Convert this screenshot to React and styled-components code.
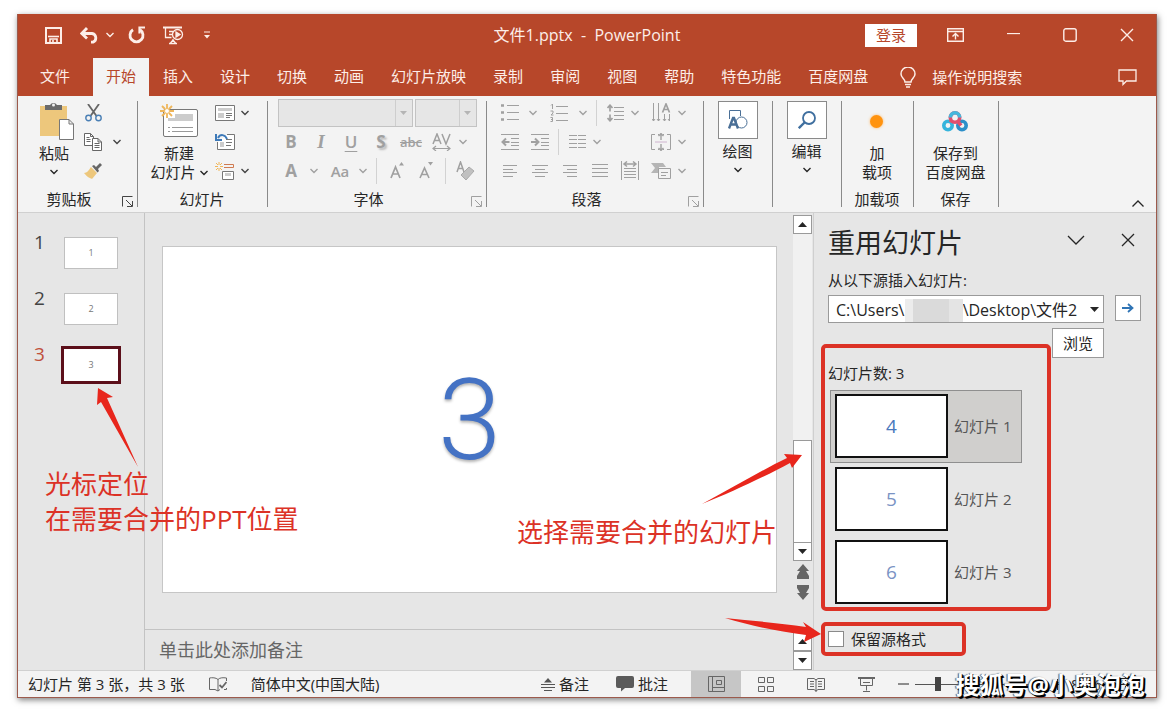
import React, { useState } from "react";
import styled, { createGlobalStyle, css } from "styled-components";

const TABS = ["文件", "开始", "插入", "设计", "切换", "动画", "幻灯片放映", "录制", "审阅", "视图", "帮助", "特色功能", "百度网盘"];
const REUSE_SLIDES = [4, 5, 6];

const Svg = ({ w, h, children, ...rest }) => (
	<svg width={w} height={h} viewBox={`0 0 ${w} ${h}`} fill="none" stroke="currentColor" aria-hidden="true" {...rest}>
		{children}
	</svg>
);

const Chevron = () => (
	<Svg w={8} h={6} strokeWidth="1.4">
		<path d="M.5 1l3.500 3.500L7.500 1" />
	</Svg>
);

const Caret = ({ up }) => (
	<Svg w={9} h={5} stroke="none">
		<path fill="currentColor" d={up ? "M0 5h9L4.500 0z" : "M0 0h9L4.500 5z"} />
	</Svg>
);

const SmallCaret = () => (
	<Svg w={7} h={4} stroke="none">
		<path fill="currentColor" d="M0 0h7L3.500 4z" />
	</Svg>
);

const Launcher = () => (
	<Svg w={11} h={11}>
		<path d="M.5 10.500V.5h10M4 4l6 6M10.500 5v5.500H5" />
	</Svg>
);

function DropTool({ w, chevron, label, children }) {
	return (
		<>
			<Tool $w={w} disabled aria-label={label}>
				{children}
			</Tool>
			<Tool $w={chevron} disabled aria-label={`${label}选项`}>
				<Chevron />
			</Tool>
		</>
	);
}

function TitleBar() {
	return (
		<TitleRow>
			<QuickBar>
				<IconButton $w={44} aria-label="保存">
					<Svg w={17} h={17} strokeWidth="2">
						<path d="M1 1h15v15H1z" />
						<path d="M3 9.500h11" strokeWidth="1.600" />
						<path d="M5 16v-4h7v4M8 13V16" strokeWidth="1.600" />
					</Svg>
				</IconButton>
				<IconButton $w={28} aria-label="撤消">
					<Svg w={19} h={17} strokeWidth="2.800">
						<path d="M2 6.500h10a4.500 4.500 0 0 1 1 8.600h-2M7 1L1.800 6.500 7 11.500" />
					</Svg>
				</IconButton>
				<IconButton $w={14} aria-label="撤消列表">
					<Chevron />
				</IconButton>
				<IconButton $w={40} aria-label="重复">
					<Svg w={18} h={18} strokeWidth="2.800">
						<path d="M5 3.800a6.500 6.500 0 1 0 7 0" />
						<path d="M17 1.500h-5.500v6" strokeWidth="2.200" />
					</Svg>
				</IconButton>
				<IconButton $w={32} aria-label="从头开始">
					<Svg w={21} h={19} strokeWidth="1.300">
						<path d="M0 1.500h19" strokeWidth="2" />
						<path d="M2.500 2v9.500h6M6 5.500h4M6 8.500h3M6 17.500h8M10 13v2M7.500 17l2.500-3 2.500 3" />
						<circle cx="14.500" cy="8.500" r="5" />
						<path d="M13 6l4 2.500-4 2.500z" fill="currentColor" />
					</Svg>
				</IconButton>
				<IconButton $w={36} aria-label="自定义快速访问工具栏">
					<Svg w={6} h={8}>
						<path d="M0 1h6" />
						<path d="M0 4h6L3 7.500z" fill="currentColor" stroke="none" />
					</Svg>
				</IconButton>
			</QuickBar>
			<DocTitle>文件1.pptx&nbsp; -&nbsp; PowerPoint</DocTitle>
			<WindowControls>
				<LoginButton>登录</LoginButton>
				<IconButton $w={76} aria-label="功能区显示选项">
					<Svg w={17} h={14} strokeWidth="1.400">
						<path d="M.7.7h15.600v12.600H.7zM1 3.500h15" />
						<path d="M8.500 11.500V6M5.500 8.500l3-3 3 3" />
					</Svg>
				</IconButton>
				<IconButton $w={40} aria-label="最小化">
					<Svg w={13} h={5} strokeWidth="1.300">
						<path d="M0 .5h13" />
					</Svg>
				</IconButton>
				<IconButton $w={74} aria-label="最大化">
					<Svg w={14} h={14} strokeWidth="1.400">
						<rect x=".8" y=".8" width="12.400" height="12.400" rx="2" />
					</Svg>
				</IconButton>
				<IconButton $w={40} aria-label="关闭">
					<Svg w={14} h={14} strokeWidth="1.400">
						<path d="M1 1l12 12M13 1L1 13" />
					</Svg>
				</IconButton>
			</WindowControls>
		</TitleRow>
	);
}

function TabBar() {
	return (
		<TabRow>
			{TABS.map((name, i) => (
				<Tab key={name} $file={i === 0} $active={i === 1}>
					{name}
				</Tab>
			))}
			<TellMe>
				<Svg w={16} h={21} strokeWidth="1.500">
					<path d="M5 15c0-3-4-4-4-8a7 7 0 0 1 14 0c0 4-4 5-4 8zM5 17.500h6M6 20h4" />
				</Svg>
				操作说明搜索
			</TellMe>
			<CommentButton aria-label="批注">
				<Svg w={19} h={17} strokeWidth="1.300">
					<path d="M1 1h17v11H8.500L5 15.500V12H1z" />
				</Svg>
			</CommentButton>
		</TabRow>
	);
}

function ClipboardGroup() {
	return (
		<Group $w={120}>
			<GroupBody $indent={14}>
				<BigButton $w={44}>
					<BigIcon>
						<Svg w={40} h={40} stroke="none">
							<path fill="#edc77c" d="M6 5h27v30H6z" />
							<path fill="#6b6b6b" d="M11 4h5a4 4 0 0 1 7 0h5v5H11z" />
							<circle cx="19.500" cy="4" r="1.500" fill="#f3f3f3" />
							<path d="M25.500 18.500H35l4.500 4.500v15.500h-14zM35 18.500V23h4.500" fill="#fff" stroke="#777" />
						</Svg>
					</BigIcon>
					粘贴
					<Chevron />
				</BigButton>
				<SmallColumn>
					<ToolRow>
						<Tool $w={34} $on aria-label="剪切">
							<Svg w={17} h={18} strokeWidth="1.800">
								<path d="M3 0l8.500 12M14 0L5.500 12" stroke="#666" />
								<circle cx="3.500" cy="14" r="2.700" stroke="#4a7fb5" strokeWidth="1.400" />
								<circle cx="13.500" cy="14" r="2.700" stroke="#4a7fb5" strokeWidth="1.400" />
							</Svg>
						</Tool>
					</ToolRow>
					<ToolRow>
						<Tool $w={34} $on aria-label="复制">
							<Svg w={18} h={18} stroke="#666">
								<path d="M.5.500h6l3 3v9h-9zM6.500.500v3h3M2.500 4.500h3M2.500 6.500h4M2.500 8.500h4" fill="#fff" />
								<path d="M8.500 5.500h5.500l3.500 3.500v8.500h-9zM14 5.500V9h3.500M10.500 10.500h5M10.500 12.500h5M10.500 14.500h5" fill="#fff" />
							</Svg>
						</Tool>
						<Tool $w={14} $on aria-label="复制选项">
							<Chevron />
						</Tool>
					</ToolRow>
					<ToolRow>
						<Tool $w={34} $on aria-label="格式刷">
							<Svg w={18} h={16} stroke="none">
								<path fill="#edc77c" d="M7 4l6 6-5 6c-2-1-5-2-8-6 3 0 5-3 7-6z" />
								<path fill="#666" d="M8 3l2-1 2 2 4-4 2 2-4 4 1 2-1.500 1.500z" />
							</Svg>
						</Tool>
					</ToolRow>
				</SmallColumn>
			</GroupBody>
			<GroupLabel $tail>
				<span>剪贴板</span>
				<LauncherButton $on aria-label="剪贴板设置">
					<Launcher />
				</LauncherButton>
			</GroupLabel>
		</Group>
	);
}

function SlidesGroup() {
	const rays = "M7 0v4M7 10v4M0 7h4M10 7h4M2 2l3 3M9 9l3 3M12 2L9 5M5 9l-3 3";
	return (
		<Group $w={130}>
			<GroupBody $indent={8}>
				<BigButton $w={66}>
					<BigIcon>
						<Svg w={38} h={34}>
							<rect x="3.500" y="5.500" width="34" height="27" rx="1.500" fill="#fff" stroke="#777" />
							<path fill="#ccc" stroke="none" d="M15 10h18v7H8v-3h7z" />
							<path d="M8 23.500h2M12 23.500h21M8 27.500h2M12 27.500h21" stroke="#999" />
							<path d={rays} stroke="#efb65a" strokeWidth="1.800" />
							<circle cx="7" cy="7" r="2.500" fill="#fff" stroke="#efb65a" />
						</Svg>
					</BigIcon>
					新建
					<Inline>
						幻灯片
						<Chevron />
					</Inline>
				</BigButton>
				<SmallColumn>
					<ToolRow>
						<Tool $w={26} $on aria-label="版式">
							<Svg w={20} h={16} stroke="#777">
								<path d="M.5.500h19v15H.5z" fill="#fff" />
								<path fill="#ccc" stroke="none" d="M3 3h14v3H3zM3 8h6v5H3z" />
								<path d="M11 8.500h6M11 10.500h6M11 12.500h4" />
							</Svg>
						</Tool>
						<Tool $w={14} $on aria-label="版式选项">
							<Chevron />
						</Tool>
					</ToolRow>
					<ToolRow>
						<Tool $w={26} $on aria-label="重置">
							<Svg w={20} h={17} stroke="#777">
								<path d="M12 1.500h7.500v15h-17V9" fill="#fff" />
								<path fill="#ccc" stroke="none" d="M5 9h4v5H5z" />
								<path d="M11 6.500h6M11 9.500h6M11 12.500h5" />
								<path d="M12 6C10 1 5 1 3 5M1 1v6h6" stroke="#3d79b8" strokeWidth="2" />
							</Svg>
						</Tool>
					</ToolRow>
					<ToolRow>
						<Tool $w={26} $on aria-label="节">
							<Svg w={20} h={18} stroke="#777">
								<path d="M4 0v3M4 6v3M0 4.500h3M5 4.500h3M1 1l2 2M7 1L5 3M1 8l2-2M7 8L5 6" stroke="#efb65a" />
								<path d="M9 2.500h9.500v3H9" stroke="#d07a50" />
								<path d="M7.500 9.500h11v8h-11z" fill="#fff" />
								<path fill="#ccc" stroke="none" d="M10 11h6v3h-6z" />
							</Svg>
						</Tool>
						<Tool $w={14} $on aria-label="节选项">
							<Chevron />
						</Tool>
					</ToolRow>
				</SmallColumn>
			</GroupBody>
			<GroupLabel>幻灯片</GroupLabel>
		</Group>
	);
}

function FontGroup() {
	return (
		<Group $w={219}>
			<GroupRows>
				<ToolRow $boxes>
					<ComboShell $w={135}>
						<DisabledSelect disabled aria-label="字体" />
						<SmallCaret />
					</ComboShell>
					<ComboShell $w={62}>
						<DisabledSelect disabled aria-label="字号" />
						<SmallCaret />
					</ComboShell>
				</ToolRow>
				<ToolRow>
					<Tool $w={30} disabled><b>B</b></Tool>
					<Tool $w={30} disabled><SerifItalic>I</SerifItalic></Tool>
					<Tool $w={30} disabled><Underlined>U</Underlined></Tool>
					<Tool $w={30} disabled><Shadowed>S</Shadowed></Tool>
					<Tool $w={30} disabled><Struck>abc</Struck></Tool>
					<DropTool w={32} chevron={10} label="字符间距">
						<Svg w={20} h={18} strokeWidth="1.500">
							<path d="M1 11L5 1l4 10M2.500 7.500h5M10 1l4 10 4-10" />
							<path d="M1 15.500h17M4 13l-3 2.500L4 18M15 13l3 2.500-3 2.500" strokeWidth="1.200" />
						</Svg>
					</DropTool>
				</ToolRow>
				<ToolRow>
					<DropTool w={30} chevron={16} label="字体颜色">
						<b>A</b>
					</DropTool>
					<DropTool w={36} chevron={10} label="更改大小写">
						<Medium>Aa</Medium>
					</DropTool>
					<Separator $gap={8} />
					<Tool $w={24} disabled aria-label="增大字号">
						<Svg w={15} h={17} strokeWidth="1.700">
							<path d="M1 16L5.500 5l4.500 11M2.500 12h6" />
							<path d="M9 3.500L11.500 0 14 3.500z" fill="currentColor" stroke="none" />
						</Svg>
					</Tool>
					<Tool $w={34} disabled aria-label="减小字号">
						<Svg w={15} h={17} strokeWidth="1.600">
							<path d="M1 16L5.500 6l4.500 10M2.500 12.500h6" />
							<path d="M9 0h5l-2.500 3.500z" fill="currentColor" stroke="none" />
						</Svg>
					</Tool>
					<Separator $gap={2} />
					<Tool $w={34} disabled aria-label="清除格式">
						<Svg w={19} h={19} strokeWidth="1.500">
							<path d="M1 11L4.500 1 8 11M2 7.500h5" />
							<path d="M13 6l5 4-8 9-5-5z" fill="#c0c0c0" stroke="#aaa" strokeWidth="1" />
						</Svg>
					</Tool>
				</ToolRow>
			</GroupRows>
			<GroupLabel $tail>
				<span>字体</span>
				<LauncherButton aria-label="字体设置">
					<Launcher />
				</LauncherButton>
			</GroupLabel>
		</Group>
	);
}

function ParagraphGroup() {
	return (
		<Group $w={217}>
			<GroupRows>
				<ToolRow>
					<DropTool w={30} chevron={16} label="项目符号">
						<Svg w={18} h={17}>
							<path d="M6 1.500h12M6 8.500h12M6 15.500h12" />
							<path d="M0 1.500h3M0 8.500h3M0 15.500h3" strokeWidth="2.500" />
						</Svg>
					</DropTool>
					<DropTool w={36} chevron={12} label="编号">
						<Svg w={18} h={18}>
							<path d="M6 2.500h12M6 9.500h12M6 16.500h12M1 1.500L2.500 0v5M.500 7h2.500v2l-2 2h2.500M.500 13.500h2v4h-2M1 15.500h1.500" />
						</Svg>
					</DropTool>
					<Separator $gap={7} />
					<DropTool w={22} chevron={18} label="行距">
						<Svg w={17} h={18}>
							<path d="M7 3.500h10M7 7.500h10M7 11.500h10M7 15.500h10" />
							<path d="M3 1v6.500M.500 4L3 1.200 5.500 4M3 10.500V17M.500 14L3 16.800 5.500 14" strokeWidth="1.700" />
						</Svg>
					</DropTool>
					<RowTail>
						<DropTool w={30} chevron={12} label="文字方向">
							<Svg w={19} h={19}>
								<path d="M1.500 0v18M6.500 0v18M12.500 11v7M17.500 11v7" />
								<path d="M0 16l1.500 2L3 16M5 16l1.500 2L8 16M11 16l1.500 2 1.500-2M16 16l1.500 2" />
								<path d="M10.500 9.500L14 1l3.500 8.500M12 6.500h4" strokeWidth="1.700" />
							</Svg>
						</DropTool>
					</RowTail>
				</ToolRow>
				<ToolRow>
					<Tool $w={30} disabled aria-label="减少缩进">
						<Svg w={18} h={16}>
							<path d="M0 .5h18M10 4.500h8M10 8.500h8M10 11.500h8M0 15.500h18" />
							<path d="M8.500 8H1.500M5 4.500L1.500 8 5 11.500" strokeWidth="2" />
						</Svg>
					</Tool>
					<Tool $w={30} disabled aria-label="增加缩进">
						<Svg w={18} h={16}>
							<path d="M0 .5h18M10 4.500h8M10 8.500h8M10 11.500h8M0 15.500h18" />
							<path d="M0 8h7M4 4.500L7.500 8 4 11.500" strokeWidth="2" />
						</Svg>
					</Tool>
					<Separator $gap={3} />
					<DropTool w={30} chevron={10} label="分栏">
						<Svg w={17} h={14}>
							<path d="M0 .5h8M9 .5h8M0 4.500h8M9 4.500h8M0 8.500h8M9 8.500h8M0 12.500h8M9 12.500h8" />
						</Svg>
					</DropTool>
					<RowTail>
						<DropTool w={30} chevron={12} label="对齐文本">
							<Svg w={20} h={18}>
								<path d="M4 1.500H.5v15H4M16 1.500h3.500v15H16M7 1.500h1M12 1.500h1M7 16.500h1M12 16.500h1" />
								<path d="M10 0v7M7.500 3L10 .7 12.500 3M10 11v7M7.500 15l2.500 2.300 2.500-2.300" strokeWidth="1.400" />
								<path d="M4 9h12" stroke="#cfb4cf" />
							</Svg>
						</DropTool>
					</RowTail>
				</ToolRow>
				<ToolRow>
					<Tool $w={30} disabled aria-label="左对齐">
						<Svg w={14} h={12}>
							<path d="M0 .5h14M0 4.500h10M0 7.500h14M0 11.500h10" />
						</Svg>
					</Tool>
					<Tool $w={30} disabled aria-label="居中">
						<Svg w={16} h={12}>
							<path d="M0 .5h16M3 4.500h10M0 7.500h16M3 11.500h10" />
						</Svg>
					</Tool>
					<Tool $w={30} disabled aria-label="右对齐">
						<Svg w={14} h={12}>
							<path d="M0 .5h14M4 4.500h10M0 7.500h14M4 11.500h10" />
						</Svg>
					</Tool>
					<Tool $w={30} disabled aria-label="两端对齐">
						<Svg w={16} h={14}>
							<path d="M0 .5h16M0 4.500h16M0 8.500h16M0 12.500h16" />
						</Svg>
					</Tool>
					<Tool $w={30} disabled aria-label="分散对齐">
						<Svg w={18} h={19}>
							<path d="M.5 0v19M17.500 0v19M3 7.500h12M3 10.500h12M3 13.500h12M3 16.500h12" />
							<path d="M3 3h12M6 .5L3 3l3 2.500M12 .5L15 3l-3 2.500" strokeWidth="1.500" />
						</Svg>
					</Tool>
					<RowTail>
						<DropTool w={30} chevron={12} label="转换为 SmartArt">
							<Svg w={20} h={16}>
								<path d="M0 0h12l3 4H8v6H0l4-5z" fill="#b5b5b5" stroke="none" />
								<path d="M7.500 5.500h12v10h-12z" fill="#f3f3f3" />
								<path d="M10 9.500h7M10 12.500h5" />
							</Svg>
						</DropTool>
					</RowTail>
				</ToolRow>
			</GroupRows>
			<GroupLabel $tail>
				<span>段落</span>
				<LauncherButton aria-label="段落设置">
					<Launcher />
				</LauncherButton>
			</GroupLabel>
		</Group>
	);
}

function Ribbon() {
	return (
		<RibbonRow>
			<ClipboardGroup />
			<SlidesGroup />
			<FontGroup />
			<ParagraphGroup />
			<Group $w={69}>
				<BigButton>
					<BigIcon $tile>
						<Tile>
							<Svg w={20} h={20} stroke="#4a6f96">
								<path d="M1.500 9V.5h11V6" />
								<circle cx="13.500" cy="12.500" r="5.500" />
								<path d="M1 18.500L5 8h1l4 10.500M2.500 14.500h6" strokeWidth="2.400" />
							</Svg>
						</Tile>
					</BigIcon>
					绘图
					<Chevron />
				</BigButton>
			</Group>
			<Group $w={69}>
				<BigButton>
					<BigIcon $tile>
						<Tile>
							<Svg w={18} h={18} stroke="#3f6f9f" strokeWidth="1.800">
								<circle cx="11" cy="7" r="6" />
								<path d="M6.500 11.500L.800 17.200" strokeWidth="2.400" />
							</Svg>
						</Tile>
					</BigIcon>
					编辑
					<Chevron />
				</BigButton>
			</Group>
			<Group $w={72}>
				<BigButton>
					<BigIcon>
						<Dot />
					</BigIcon>
					加
					<br />
					载项
				</BigButton>
				<GroupLabel>加载项</GroupLabel>
			</Group>
			<Group $w={85}>
				<BigButton>
					<BigIcon>
						<Svg w={26} h={21} strokeWidth="3.600">
							<circle cx="6" cy="14.500" r="4.200" stroke="#35b4dc" />
							<circle cx="20" cy="14.500" r="4.200" stroke="#2c8fc9" />
							<circle cx="13" cy="6.500" r="4.700" stroke="#e0506e" />
							<path d="M8.300 6.500a4.700 4.700 0 0 1 9.400 0" stroke="#45b8dd" />
							<path d="M9.500 10L8.800 11.500M16 10.500l3 4" stroke="#e0506e" />
						</Svg>
					</BigIcon>
					保存到
					<br />
					百度网盘
				</BigButton>
				<GroupLabel>保存</GroupLabel>
			</Group>
			<CollapseButton aria-label="折叠功能区">
				<Svg w={12} h={7} strokeWidth="1.300">
					<path d="M.5 6.500L6 1l5.500 5.500" />
				</Svg>
			</CollapseButton>
		</RibbonRow>
	);
}

function ThumbnailPane() {
	return (
		<Thumbnails>
			{[1, 2, 3].map((n) => (
				<ThumbRow key={n}>
					<ThumbNumber $active={n === 3}>{n}</ThumbNumber>
					<ThumbFrame $active={n === 3}>{n}</ThumbFrame>
				</ThumbRow>
			))}
			<CursorArrow>
				<Svg w={42} h={80} stroke="none">
					<path fill="#e8261c" d="M1 0l15 9-6 1 31 69L4 14l-4 3z" />
				</Svg>
			</CursorArrow>
			<CursorNote>
				光标定位
				<br />
				在需要合并的PPT位置
			</CursorNote>
		</Thumbnails>
	);
}

function Editor() {
	return (
		<EditorPane>
			<StageRow>
				<Stage>
					<Slide>3</Slide>
				</Stage>
				<ScrollColumn>
					<ScrollButton aria-label="向上滚动">
						<Caret up />
					</ScrollButton>
					<Track>
						<TrackThumb />
					</Track>
					<ScrollButton aria-label="向下滚动">
						<Caret />
					</ScrollButton>
					<JumpButton aria-label="上一张">
						<Svg w={12} h={15} stroke="none">
							<path fill="#666" d="M6 0l6 7H9l3 5v3H0v-3l3-5H0z" />
						</Svg>
					</JumpButton>
					<JumpButton aria-label="下一张">
						<Svg w={12} h={15} stroke="none">
							<path fill="#666" d="M6 15l6-7H9l3-5V0H0v3l3 5H0z" />
						</Svg>
					</JumpButton>
				</ScrollColumn>
				<SelectNote>选择需要合并的幻灯片</SelectNote>
				<SelectArrow>
					<Svg w={100} h={50} stroke="none">
						<path fill="#e8261c" d="M0 50C30 34 60 16 85 4l-3-4 18 1-10 13-2-5C64 22 30 38 0 50z" />
					</Svg>
				</SelectArrow>
			</StageRow>
			<NotesRow>
				<Notes>单击此处添加备注</Notes>
				<ScrollColumn>
					<ScrollButton aria-label="备注向上">
						<Caret up />
					</ScrollButton>
					<ScrollButton aria-label="备注向下">
						<Caret />
					</ScrollButton>
				</ScrollColumn>
			</NotesRow>
		</EditorPane>
	);
}

function ReusePane() {
	const [path, setPath] = useState("C:\\Users\\              \\Desktop\\文件2");
	const [keep, setKeep] = useState(false);
	const [selected, setSelected] = useState(0);

	return (
		<Reuse>
			<ReuseHeader>
				<ReuseTitle>重用幻灯片</ReuseTitle>
				<PaneButton aria-label="任务窗格选项">
					<Svg w={18} h={10} strokeWidth="1.300">
						<path d="M1 1l8 8 8-8" />
					</Svg>
				</PaneButton>
				<PaneButton aria-label="关闭窗格">
					<Svg w={14} h={14} strokeWidth="1.300">
						<path d="M1 1l12 12M13 1L1 13" />
					</Svg>
				</PaneButton>
			</ReuseHeader>
			<SourceLabel htmlFor="source">从以下源插入幻灯片:</SourceLabel>
			<SourceRow>
				<PathBox>
					<PathInput id="source" value={path} onChange={(e) => setPath(e.target.value)} />
					<Mosaic />
					<Caret />
				</PathBox>
				<GoButton aria-label="转到">
					<Svg w={12} h={10} stroke="#2f74b5" strokeWidth="1.800">
						<path d="M0 5h10M6 1l4.500 4L6 9" />
					</Svg>
				</GoButton>
			</SourceRow>
			<BrowseButton>浏览</BrowseButton>
			<ReuseList>
				<RedFrame />
				<Count>幻灯片数: 3</Count>
				{REUSE_SLIDES.map((n, i) => (
					<ReuseItem key={n} $active={selected === i} onClick={() => setSelected(i)}>
						<ReuseThumb $active={i === 0}>{n}</ReuseThumb>
						幻灯片 {i + 1}
					</ReuseItem>
				))}
			</ReuseList>
			<KeepRow>
				<RedFrame $tight />
				<KeepArrow>
					<Svg w={96} h={24} stroke="none">
						<path fill="#e8261c" d="M0 0c28 3 56 5 81 9l-3-5 18 12-17 8 2-7C56 14 26 8 0 0z" />
					</Svg>
				</KeepArrow>
				<KeepBox id="keep" type="checkbox" checked={keep} onChange={(e) => setKeep(e.target.checked)} />
				<label htmlFor="keep">保留源格式</label>
			</KeepRow>
		</Reuse>
	);
}

function StatusBar() {
	return (
		<StatusRow>
			<StatusText>幻灯片 第 3 张，共 3 张</StatusText>
			<StatusButton $w={66} aria-label="拼写检查">
				<Svg w={18} h={15} stroke="#666">
					<path d="M9 2.500V14M9 2.500C7 .5 3 .5.5 1v11.500H6L9 14l2-1.500M9 2.500C11 .5 14 .5 17.500 1v3M17.500 11v1.500H15" />
					<path d="M10.500 8l2.500 2.500L17.500 5" strokeWidth="1.800" />
				</Svg>
			</StatusButton>
			<StatusText>简体中文(中国大陆)</StatusText>
			<StatusRight>
				<StatusButton $w={75} $text>
					<Svg w={14} h={13} stroke="#555">
						<path d="M0 6.500h14M0 9.500h14M3 12.500h8" />
						<path d="M3 4.500h8L7 0z" fill="#555" stroke="none" />
					</Svg>
					备注
				</StatusButton>
				<StatusButton $w={75} $text>
					<Svg w={18} h={16} stroke="none">
						<path fill="#5a5a5a" d="M2 0h14a2 2 0 0 1 2 2v8a2 2 0 0 1-2 2H9l-4 3.500V12H2a2 2 0 0 1-2-2V2a2 2 0 0 1 2-2z" />
					</Svg>
					批注
				</StatusButton>
				<StatusButton $w={50} $active aria-label="普通视图">
					<Svg w={17} h={16} stroke="#666">
						<path d="M.5.500h16v15H.5zM4.500.500v15M4.500 11.500h12M8.500 4.500h5v4h-5z" />
					</Svg>
				</StatusButton>
				<StatusButton $w={50} aria-label="幻灯片浏览">
					<Svg w={16} h={15} stroke="#666">
						<path d="M.5.500h6v5h-6zM9.500.500h6v5h-6zM.5 9.500h6v5h-6zM9.500 9.500h6v5h-6z" />
					</Svg>
				</StatusButton>
				<StatusButton $w={50} aria-label="阅读视图">
					<Svg w={18} h={15} stroke="#666">
						<path d="M9 2v13M.5 1.500H7L9 3l2-1.500h6.500v11H11L9 14l-2-1.500H.5zM3 4.500h4M3 7h4M3 9.500h4M11 4.500h4M11 7h4M11 9.500h4" />
					</Svg>
				</StatusButton>
				<StatusButton $w={50} aria-label="幻灯片放映">
					<Svg w={17} h={15} stroke="#666">
						<path d="M0 1h17" strokeWidth="2" />
						<path d="M2.500 2v6.500h12V2M5 5.500h7M8.500 8.500v5M5 14.500h7" />
					</Svg>
				</StatusButton>
				<ZoomArea>
					<StatusButton $w={24} aria-label="缩小">
						<Svg w={11} h={2}>
							<path d="M0 1h11" />
						</Svg>
					</StatusButton>
					<ZoomRange type="range" min="10" max="400" defaultValue="74" aria-label="缩放" />
					<StatusButton $w={28} aria-label="放大">
						<Svg w={11} h={11}>
							<path d="M0 5.500h11M5.500 0v11" />
						</Svg>
					</StatusButton>
					<StatusText>83%</StatusText>
					<StatusButton $w={50} aria-label="适应窗口">
						<Svg w={15} h={13}>
							<path d="M.5.500h14v12H.500zM7.500 2v3M7.500 8v3M3 6.500h3M9 6.500h3" />
						</Svg>
					</StatusButton>
				</ZoomArea>
			</StatusRight>
			<Watermark>搜狐号@小奥泡泡</Watermark>
		</StatusRow>
	);
}

function App() {
	return (
		<>
			<GlobalStyle />
			<Desk>
				<AppWindow>
					<TitleBar />
					<TabBar />
					<Ribbon />
					<Workspace>
						<ThumbnailPane />
						<Editor />
						<ReusePane />
					</Workspace>
					<StatusBar />
				</AppWindow>
			</Desk>
		</>
	);
}

const GlobalStyle = createGlobalStyle`
	* {
		box-sizing: border-box;
	}
	body {
		margin: 0;
		background: #fff;
		color: #262626;
		font: 15px/20px "Open Sans", "Noto Sans CJK SC", sans-serif;
	}
	button,
	input,
	select {
		font: inherit;
		color: inherit;
	}
	button {
		display: flex;
		align-items: center;
		justify-content: center;
		padding: 0;
		border: 0;
		background: none;
		white-space: nowrap;
	}
	svg {
		display: block;
		flex: none;
	}
`;

const Desk = styled.div`
	display: grid;
	min-height: 100vh;
	padding: 14px 15px 13px 17px;
`;

const AppWindow = styled.main`
	display: grid;
	grid-template-rows: auto auto auto 1fr auto;
	border: 1px solid #9c5a4c;
	border-top: 0;
	background: #e6e6e6;
	box-shadow: 1px 2px 6px rgba(0, 0, 0, 0.5);
`;

const TitleRow = styled.header`
	display: grid;
	grid-template-columns: 1fr auto 1fr;
	align-items: center;
	height: 44px;
	padding-bottom: 2px;
	background: #b7472a;
	color: #fdeee8;
`;

const QuickBar = styled.div`
	display: flex;
	align-items: center;
	padding-left: 13px;
`;

const IconButton = styled.button`
	width: ${(p) => p.$w}px;
	height: 40px;
`;

const DocTitle = styled.h1`
	margin: 0;
	font-size: 16px;
	font-weight: 400;
`;

const WindowControls = styled.div`
	display: flex;
	align-items: center;
	justify-content: flex-end;
	padding-right: 9px;
`;

const LoginButton = styled.button`
	width: 52px;
	height: 23px;
	background: #fff;
	color: #b7472a;
`;

const TabRow = styled.nav`
	display: flex;
	gap: 1px;
	height: 38px;
	background: #b7472a;
	color: #fdeee8;
`;

const Tab = styled.button`
	padding: 0 ${(p) => (p.$file ? 22 : 13)}px 2px;
	${(p) =>
		p.$active &&
		css`
			background: #f3f3f3;
			color: #b7472a;
		`}
`;

const TellMe = styled.button`
	gap: 16px;
	margin-left: 18px;
`;

const CommentButton = styled.button`
	margin-left: auto;
	padding: 0 19px;
`;

const RibbonRow = styled.section`
	display: flex;
	height: 117px;
	border-bottom: 1px solid #d0d0d0;
	background: #f3f3f3;
`;

const Group = styled.div`
	position: relative;
	display: flex;
	flex-direction: column;
	flex: none;
	width: ${(p) => p.$w}px;
	padding: 2px 2px 0 0;
	&::after {
		content: "";
		position: absolute;
		top: 5px;
		right: 0;
		bottom: 5px;
		width: 1px;
		background: #8a8a8a;
	}
`;

const GroupBody = styled.div`
	display: flex;
	align-items: flex-start;
	padding-left: ${(p) => p.$indent}px;
`;

const GroupRows = styled.div`
	padding: 0 14px 0 8px;
`;

const GroupLabel = styled.div`
	display: flex;
	align-items: center;
	justify-content: center;
	height: 26px;
	margin-top: auto;
	${(p) =>
		p.$tail &&
		css`
			display: grid;
			grid-template-columns: 1fr auto;
			padding-left: 2px;
			text-align: center;
		`}
`;

const LauncherButton = styled.button`
	width: 18px;
	height: 22px;
	padding-top: 4px;
	color: ${(p) => (p.$on ? "#444" : "#a0a0a0")};
`;

const BigButton = styled.button`
	flex-direction: column;
	justify-content: flex-start;
	align-self: ${(p) => (p.$w ? "flex-start" : "center")};
	width: ${(p) => (p.$w ? `${p.$w}px` : "auto")};
	line-height: 19px;
	& > svg {
		margin-top: 6px;
	}
`;

const BigIcon = styled.span`
	display: flex;
	align-items: ${(p) => (p.$tile ? "flex-start" : "center")};
	justify-content: center;
	height: ${(p) => (p.$tile ? 44 : 46)}px;
	padding-top: ${(p) => (p.$tile ? 3 : 0)}px;
`;

const Inline = styled.span`
	display: flex;
	align-items: center;
	gap: 4px;
`;

const Tile = styled.span`
	display: grid;
	place-items: center;
	width: 40px;
	height: 38px;
	border: 1px solid #8a8a8a;
	background: #fff;
`;

const Dot = styled.span`
	width: 13px;
	height: 13px;
	border-radius: 50%;
	background: #ff930f;
	box-shadow: 0 0 3px #ffb765;
`;

const SmallColumn = styled.div`
	display: flex;
	flex-direction: column;
`;

const ToolRow = styled.div`
	display: flex;
	align-items: center;
	height: 29px;
	${(p) =>
		p.$boxes &&
		css`
			gap: 2px;
			padding-left: 2px;
		`}
`;

const RowTail = styled.div`
	display: flex;
	margin-left: auto;
`;

const Tool = styled.button`
	flex: none;
	width: ${(p) => p.$w}px;
	height: 26px;
	color: ${(p) => (p.$on ? "#444" : "#a0a0a0")};
	b {
		font-size: 17px;
		font-weight: 700;
	}
`;

const SerifItalic = styled.i`
	font-family: "Liberation Serif", serif;
	font-size: 19px;
	font-weight: 700;
`;

const Underlined = styled.u`
	font-size: 17px;
	font-weight: 600;
	text-underline-offset: 3px;
`;

const Shadowed = styled.span`
	font-size: 17px;
	font-weight: 700;
	text-shadow: 2px 2px 2px #bbb;
`;

const Struck = styled.s`
	font-size: 13px;
	font-weight: 600;
`;

const Medium = styled.span`
	font-weight: 600;
`;

const Separator = styled.span`
	flex: none;
	width: 1px;
	height: 26px;
	margin: 0 ${(p) => p.$gap}px;
	background: #d2d2d2;
`;

const ComboShell = styled.span`
	display: flex;
	flex: none;
	align-items: center;
	width: ${(p) => p.$w}px;
	height: 28px;
	padding-right: 5px;
	border: 1px solid #c3c3c3;
	background: #e6e6e6;
	color: #b5b5b5;
`;

const DisabledSelect = styled.select`
	flex: 1;
	min-width: 0;
	height: 26px;
	margin-right: 4px;
	border: 0;
	border-right: 1px solid #c3c3c3;
	background: none;
	appearance: none;
`;

const CollapseButton = styled.button`
	align-self: flex-end;
	width: 36px;
	height: 18px;
	margin-left: auto;
`;

const Workspace = styled.div`
	display: grid;
	grid-template-columns: 127px 1fr 342px;
`;

const Thumbnails = styled.aside`
	position: relative;
	padding-top: 12px;
	border-right: 1px solid #c3c3c3;
`;

const ThumbRow = styled.div`
	display: grid;
	grid-template-columns: 43px 60px;
	align-items: center;
	height: 56px;
`;

const ThumbNumber = styled.span`
	align-self: start;
	padding: 7px 0 0 16px;
	font-size: 19px;
	color: ${(p) => (p.$active ? "#c0503a" : "#444")};
`;

const ThumbFrame = styled.div`
	display: grid;
	place-items: center;
	height: 32px;
	margin: 0 3px;
	border: 1px solid #c0c0c0;
	background: #fff;
	color: #777;
	font-size: 9px;
	${(p) =>
		p.$active &&
		css`
			height: 38px;
			margin: 0;
			border: 3px solid #5c0f1a;
		`}
`;

const annotation = css`
	position: absolute;
	z-index: 2;
	color: #dc3226;
	font-size: 26px;
	line-height: 35px;
	white-space: nowrap;
	pointer-events: none;
`;

const CursorArrow = styled.div`
	${annotation}
	top: 175px;
	left: 79px;
`;

const CursorNote = styled.div`
	${annotation}
	top: 254px;
	left: 27px;
`;

const SelectNote = styled.div`
	${annotation}
	right: 36px;
	bottom: 79px;
`;

const SelectArrow = styled.div`
	${annotation}
	right: 11px;
	bottom: 125px;
`;

const EditorPane = styled.section`
	display: grid;
	grid-template-rows: 1fr 40px;
	border-right: 1px solid #cfcfcf;
`;

const StageRow = styled.div`
	position: relative;
	display: flex;
	border-bottom: 1px solid #c3c3c3;
`;

const Stage = styled.div`
	flex: 1;
	display: grid;
	padding: 33px 16px 36px 17px;
`;

const Slide = styled.div`
	display: grid;
	place-items: center;
	border: 1px solid #c6c6c6;
	background: #fff;
	color: #4472c4;
	font: 300 114px/120px Roboto, sans-serif;
	text-shadow: 0 2px 3px rgba(0, 0, 0, 0.3);
`;

const ScrollColumn = styled.div`
	display: flex;
	flex-direction: column;
	width: 20px;
	padding: 2px 1px 0 0;
`;

const ScrollButton = styled.button`
	flex: none;
	height: 19px;
	border: 1px solid #9a9a9a;
	background: #fff;
`;

const Track = styled.div`
	flex: 1;
	display: flex;
	align-items: flex-end;
	background: #f1f1f1;
`;

const TrackThumb = styled.div`
	width: 100%;
	height: 33%;
	border: 1px solid #9a9a9a;
	border-bottom: 0;
	background: #fff;
`;

const JumpButton = styled.button`
	height: 21px;
	&:last-child {
		margin-bottom: 26px;
	}
`;

const NotesRow = styled.div`
	display: flex;
`;

const Notes = styled.div`
	flex: 1;
	padding: 10px 14px;
	color: #666;
	font-size: 18px;
`;

const Reuse = styled.aside`
	padding: 13px 15px 0 14px;
`;

const ReuseHeader = styled.div`
	display: flex;
	align-items: flex-start;
	height: 34px;
`;

const ReuseTitle = styled.h2`
	flex: 1;
	margin: 0;
	font-size: 27px;
	font-weight: 400;
	line-height: 34px;
`;

const PaneButton = styled.button`
	width: 26px;
	height: 28px;
	& + & {
		margin-left: 26px;
	}
`;

const SourceLabel = styled.label`
	display: block;
	margin: 10px 0 5px;
	line-height: 20px;
`;

const SourceRow = styled.div`
	display: flex;
	gap: 11px;
`;

const PathBox = styled.div`
	position: relative;
	flex: 1;
	display: flex;
	align-items: center;
	height: 28px;
	padding-right: 4px;
	border: 1px solid #9a9a9a;
	background: #fff;
`;

const PathInput = styled.input`
	flex: 1;
	min-width: 0;
	height: 24px;
	padding: 0 0 0 7px;
	border: 0;
	outline: 0;
	background: none;
	font-size: 16px;
`;

const Mosaic = styled.span`
	position: absolute;
	top: 3px;
	left: 76px;
	width: 58px;
	height: 23px;
	background: linear-gradient(90deg, #ececec 0 8px, #dadada 8px 44px, #e4e4e4 44px);
`;

const GoButton = styled.button`
	width: 26px;
	height: 26px;
	border: 1px solid #9a9a9a;
	background: #fff;
`;

const BrowseButton = styled.button`
	width: 52px;
	height: 30px;
	margin: 5px 37px 0 auto;
	border: 1px solid #9a9a9a;
	background: #fff;
`;

const ReuseList = styled.div`
	position: relative;
	margin-top: 5px;
`;

const Count = styled.div`
	height: 27px;
`;

const ReuseItem = styled.button`
	justify-content: flex-start;
	gap: 6px;
	width: 192px;
	height: 73px;
	margin-left: 2px;
	padding: 0 0 1px 4px;
	border: 1px solid ${(p) => (p.$active ? "#8f8f8f" : "transparent")};
	background: ${(p) => (p.$active ? "#d0cfcd" : "transparent")};
	color: #555;
`;

const ReuseThumb = styled.span`
	display: grid;
	place-items: center;
	width: 113px;
	height: 64px;
	border: 2px solid #111;
	background: #fff;
	color: ${(p) => (p.$active ? "#4a78bd" : "#7a93c4")};
	font-size: 19px;
`;

const RedFrame = styled.span`
	position: absolute;
	top: ${(p) => (p.$tight ? -6 : -19)}px;
	bottom: ${(p) => (p.$tight ? -6 : -2)}px;
	left: -7px;
	width: ${(p) => (p.$tight ? 145 : 230)}px;
	border: 4px solid #dc3226;
	border-radius: 5px;
	pointer-events: none;
`;

const KeepRow = styled.div`
	position: relative;
	display: flex;
	align-items: center;
	gap: 7px;
	height: 22px;
	margin-top: 19px;
`;

const KeepArrow = styled.div`
	${annotation}
	top: -10px;
	left: -103px;
`;

const KeepBox = styled.input`
	width: 16px;
	height: 16px;
	margin: 0;
	border: 1px solid #8a8a8a;
	background: #fff;
	appearance: none;
	&:checked {
		background: #b7472a;
	}
`;

const StatusRow = styled.footer`
	position: relative;
	display: flex;
	align-items: center;
	height: 27px;
	padding-left: 10px;
	border-top: 1px solid #d0d0d0;
	background: #f3f3f3;
`;

const StatusText = styled.span`
	white-space: nowrap;
`;

const StatusRight = styled.div`
	display: flex;
	align-items: center;
	margin-left: auto;
`;

const StatusButton = styled.button`
	justify-content: ${(p) => (p.$text ? "flex-start" : "center")};
	gap: 4px;
	width: ${(p) => p.$w}px;
	height: 26px;
	background: ${(p) => (p.$active ? "#c6c6c6" : "none")};
`;

const ZoomArea = styled.div`
	display: flex;
	align-items: center;
	width: 265px;
`;

const ZoomRange = styled.input`
	width: 128px;
	height: 16px;
	margin: 0;
	background: linear-gradient(#555, #555) center / 100% 1px no-repeat;
	appearance: none;
	&::-webkit-slider-thumb {
		width: 6px;
		height: 14px;
		background: #444;
		appearance: none;
	}
`;

const Watermark = styled.div`
	position: absolute;
	right: 11px;
	bottom: -4px;
	color: #fff;
	font-size: 24px;
	font-weight: 700;
	line-height: 32px;
	white-space: nowrap;
	text-shadow: 1px 1px 0 #000, 2px 2px 0 #000, -1px 0 1px #555;
`;

export default App;
